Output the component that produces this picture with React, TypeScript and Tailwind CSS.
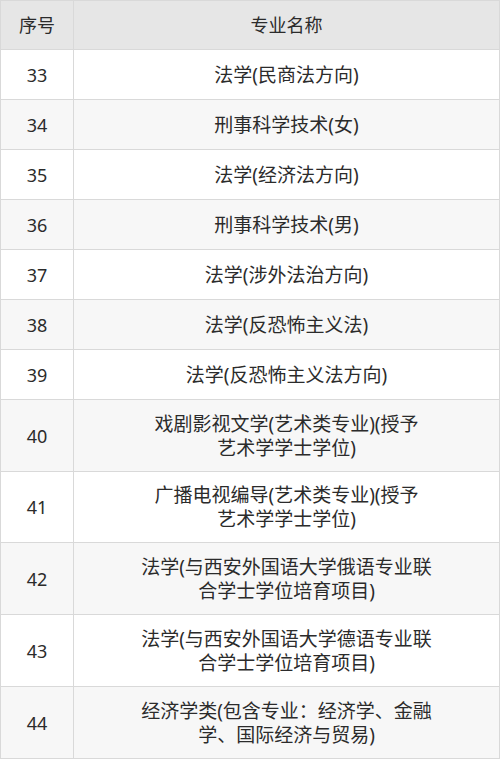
import React from 'react'

type Row = { no: string; lines: string[]; h: string }

const rows: Row[] = [
  { no: '33', lines: ['法学(民商法方向)'], h: 'h-[50px]' },
  { no: '34', lines: ['刑事科学技术(女)'], h: 'h-[50px]' },
  { no: '35', lines: ['法学(经济法方向)'], h: 'h-[50px]' },
  { no: '36', lines: ['刑事科学技术(男)'], h: 'h-[50px]' },
  { no: '37', lines: ['法学(涉外法治方向)'], h: 'h-[50px]' },
  { no: '38', lines: ['法学(反恐怖主义法)'], h: 'h-[50px]' },
  { no: '39', lines: ['法学(反恐怖主义法方向)'], h: 'h-[50px]' },
  { no: '40', lines: ['戏剧影视文学(艺术类专业)(授予', '艺术学学士学位)'], h: 'h-[72px]' },
  { no: '41', lines: ['广播电视编导(艺术类专业)(授予', '艺术学学士学位)'], h: 'h-[71px]' },
  { no: '42', lines: ['法学(与西安外国语大学俄语专业联', '合学士学位培育项目)'], h: 'h-[72px]' },
  { no: '43', lines: ['法学(与西安外国语大学德语专业联', '合学士学位培育项目)'], h: 'h-[72px]' },
  { no: '44', lines: ['经济学类(包含专业：经济学、金融', '学、国际经济与贸易)'], h: 'h-[72px]' },
]

export default function App() {
  return (
    <div
      className="w-[500px] bg-white text-[18px] leading-[24px] text-[#2b2b2b]"
      style={{ fontFamily: '"Noto Sans", "Noto Sans CJK SC", sans-serif' }}
    >
      <div className="border-x border-[#d9d9d9]">
        <div className="flex h-[50px] border-t border-b border-[#d9d9d9] bg-[#e6e6e6]">
          <div className="flex w-[73px] items-center justify-center border-r border-[#d9d9d9]">序号</div>
          <div className="flex flex-1 items-center justify-center">专业名称</div>
        </div>
        {rows.map((r, i) => (
          <div
            key={r.no}
            className={`flex ${r.h} border-b border-[#d9d9d9] ${i % 2 === 1 ? 'bg-[#f7f7f7]' : 'bg-white'}`}
          >
            <div className="flex w-[73px] items-center justify-center border-r border-[#d9d9d9]">{r.no}</div>
            <div className="flex flex-1 flex-col items-center justify-center text-center text-[19px]">
              {r.lines.map((l) => (
                <span key={l}>{l}</span>
              ))}
            </div>
          </div>
        ))}
      </div>
    </div>
  )
}
